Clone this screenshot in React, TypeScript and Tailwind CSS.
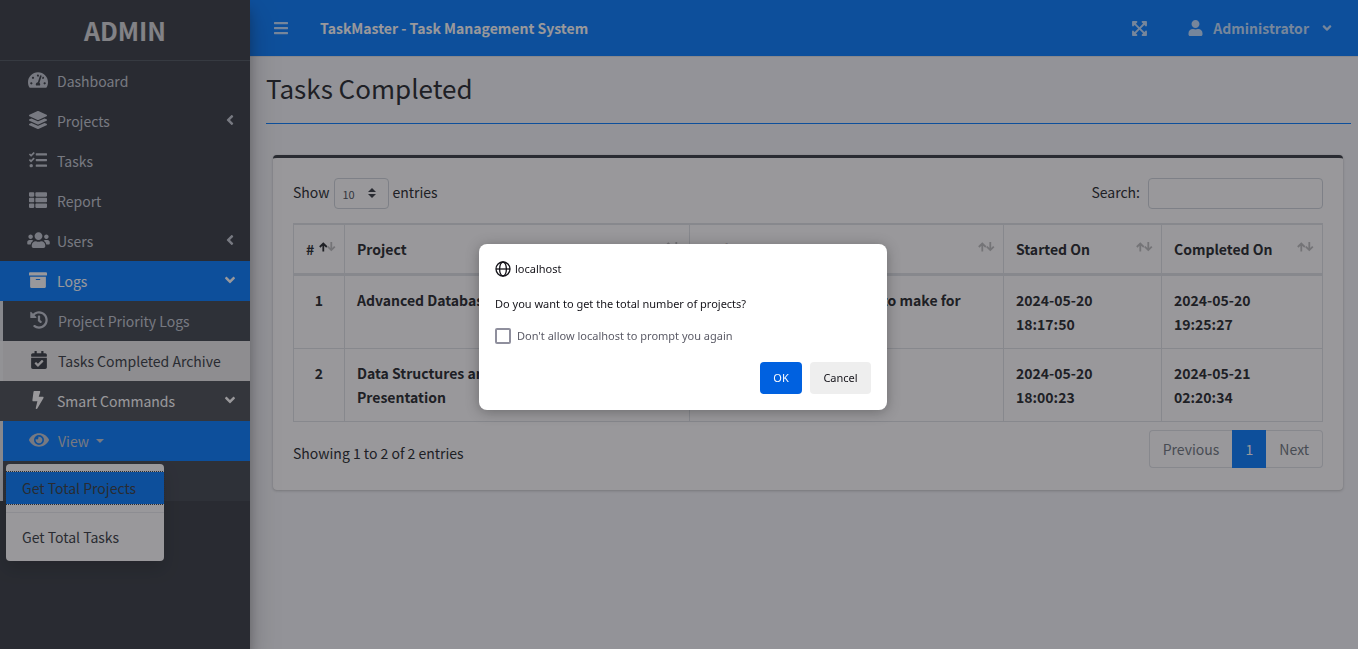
import type { ReactNode } from 'react';
import type { IconType } from 'react-icons';
import {
  FaAngleDown,
  FaAngleLeft,
  FaArchive,
  FaBars,
  FaBolt,
  FaCalendarCheck,
  FaExpandArrowsAlt,
  FaEye,
  FaHistory,
  FaLayerGroup,
  FaTachometerAlt,
  FaTasks,
  FaThList,
  FaUser,
  FaUsers,
} from 'react-icons/fa';

type NavLinkProps = {
  icon: IconType;
  label: ReactNode;
  arrow?: 'left' | 'down';
  iconWidth?: string;
  className: string;
};

function NavLink({ icon: Icon, label, arrow, iconWidth = 'w-[18px]', className }: NavLinkProps) {
  return (
    <a href="#" className={`flex h-10 items-center pr-[14px] ${className}`}>
      <span className="mr-1 flex w-[30px] justify-center pb-0.5">
        <Icon className={`h-[18px] shrink-0 ${iconWidth}`} />
      </span>
      <span className="flex flex-1 items-center">{label}</span>
      {arrow === 'left' && <FaAngleLeft className="mb-0.5 h-4 w-3" />}
      {arrow === 'down' && <FaAngleDown className="mb-0.5 h-4 w-3" />}
    </a>
  );
}

function Sidebar() {
  return (
    <aside className="relative z-10 w-[250px] shrink-0 bg-[#343a40] shadow-[0_14px_28px_rgba(0,0,0,0.25),0_10px_10px_rgba(0,0,0,0.22)]">
      <a
        href="#"
        className="flex h-[61px] items-center justify-center border-b border-[#4b545c] text-[25px] font-bold text-white/80"
      >
        ADMIN
      </a>
      <nav>
        <ul>
          <li>
            <NavLink icon={FaTachometerAlt} iconWidth="w-5" label="Dashboard" className="pl-[23px] text-[#c2c7d0]" />
          </li>
          <li>
            <NavLink icon={FaLayerGroup} label="Projects" arrow="left" className="pl-[23px] text-[#c2c7d0]" />
          </li>
          <li>
            <NavLink icon={FaTasks} label="Tasks" className="pl-[23px] text-[#c2c7d0]" />
          </li>
          <li>
            <NavLink icon={FaThList} label="Report" className="pl-[23px] text-[#c2c7d0]" />
          </li>
          <li>
            <NavLink
              icon={FaUsers}
              iconWidth="w-[23px]"
              label="Users"
              arrow="left"
              className="pl-[23px] text-[#c2c7d0]"
            />
          </li>
          <li>
            <NavLink icon={FaArchive} label="Logs" arrow="down" className="bg-[#007bff] pl-[23px] text-white" />
            <ul>
              <li className="border-l-3 border-[#dee2e6] bg-[#3d444c]">
                <NavLink icon={FaHistory} label="Project Priority Logs" className="pl-[21px] text-[#c2c7d0]" />
              </li>
              <li className="border-l-3 border-[#f3f4f5] bg-[#ebebec]">
                <NavLink icon={FaCalendarCheck} label="Tasks Completed Archive" className="pl-[21px] text-[#343a40]" />
              </li>
            </ul>
          </li>
          <li>
            <NavLink icon={FaBolt} label="Smart Commands" arrow="down" className="bg-[#484e53] pl-[23px] text-white" />
            <ul>
              <li className="relative border-l-3 border-[#dee2e6] bg-[#3d444c] pb-10">
                <NavLink
                  icon={FaEye}
                  iconWidth="w-5"
                  label={
                    <>
                      View
                      <svg viewBox="0 0 8 4" className="ml-[7px] h-1 w-2 fill-current">
                        <path d="M0 0h8L4 4z" />
                      </svg>
                    </>
                  }
                  className="bg-[#007bff] pl-[21px] text-[#c2c7d0]"
                />
                <div className="absolute top-[43px] left-[3px] w-[158px] rounded bg-white py-2 text-[#343a40] shadow-[0_8px_16px_rgba(0,0,0,0.18)]">
                  <a
                    href="#"
                    className="block bg-[#007bff] px-4 py-1 leading-6 outline-1 outline-dotted outline-[#343a40]"
                  >
                    Get Total Projects
                  </a>
                  <hr className="my-2 border-[#e9ecef]" />
                  <a href="#" className="block px-4 py-1 leading-6">
                    Get Total Tasks
                  </a>
                </div>
              </li>
            </ul>
          </li>
        </ul>
      </nav>
    </aside>
  );
}

function TopBar() {
  return (
    <header className="flex h-[57px] items-center border-b border-[#dee2e6] bg-[#007bff] px-6 font-bold text-white/75">
      <button type="button" aria-label="Toggle menu" className="mr-8">
        <FaBars className="h-4 w-[14px]" />
      </button>
      <a href="#" className="text-white">
        TaskMaster - Task Management System
      </a>
      <button type="button" aria-label="Full screen" className="ml-auto">
        <FaExpandArrowsAlt className="size-[17px]" />
      </button>
      <button type="button" className="ml-10 flex items-center">
        <FaUser className="mr-[10px] h-4 w-[15px]" />
        Administrator
        <FaAngleDown className="ml-[11px] size-[14px]" />
      </button>
    </header>
  );
}

function SortArrows({ sorted = false }: { sorted?: boolean }) {
  return (
    <svg
      viewBox="0 0 17 10"
      className="mb-1 h-[10px] w-[17px] fill-none stroke-current"
      strokeWidth="1.8"
      strokeLinejoin="miter"
    >
      <path d="M4.3 9.5V1.6M0.8 5L4.3 1.5L7.8 5" opacity={sorted ? 1 : 0.3} />
      <path d="M12.3 0V8M8.8 4.6L12.3 8.1L15.8 4.6" opacity="0.3" />
    </svg>
  );
}

const columns = [
  { label: '#', width: 'w-[51px]', sorted: true },
  { label: 'Project', width: 'w-[33.5%]', sorted: false },
  { label: 'Task', width: '', sorted: false },
  { label: 'Started On', width: 'w-[158px]', sorted: false },
  { label: 'Completed On', width: 'w-[161px]', sorted: false },
];

const rows = [
  ['1', 'Advanced Database', 'Choose the best diagrams to make for presentation', '2024-05-20 18:17:50', '2024-05-20 19:25:27'],
  ['2', 'Data Structures and Algorithms Project Presentation', 'Slides', '2024-05-20 18:00:23', '2024-05-21 02:20:34'],
];

function TasksTable() {
  return (
    <table className="mt-[14px] w-full table-fixed border-separate border-spacing-0 border-r border-[#dee2e6] text-left font-bold">
      <thead>
        <tr>
          {columns.map((column) => (
            <th
              key={column.label}
              className={`border-t-2 border-b-3 border-l border-[#dee2e6] py-3 pr-2 pl-3 ${column.width}`}
            >
              <div className="flex items-center justify-between">
                {column.label}
                <SortArrows sorted={column.sorted} />
              </div>
            </th>
          ))}
        </tr>
      </thead>
      <tbody>
        {rows.map((row) => (
          <tr key={row[0]}>
            {row.map((cell, index) => (
              <td
                key={index}
                className={`border-b border-l border-[#dee2e6] p-3 align-top ${index === 0 ? 'text-center' : ''}`}
              >
                {cell}
              </td>
            ))}
          </tr>
        ))}
      </tbody>
    </table>
  );
}

function TasksCard() {
  return (
    <section className="mt-[31px] mr-2 ml-[7px] rounded border-t-3 border-[#343a40] bg-white px-5 pt-5 pb-[22px] shadow-[0_0_1px_rgba(0,0,0,0.125),0_1px_3px_rgba(0,0,0,0.2)]">
      <div className="flex items-start justify-between leading-7">
        <label className="flex items-start gap-1">
          Show
          <span className="relative">
            <select className="block h-[31px] w-[55px] appearance-none rounded border border-[#ced4da] bg-white pl-2 text-[11px] text-[#495057]">
              <option>10</option>
              <option>25</option>
              <option>50</option>
            </select>
            <svg
              viewBox="0 0 8 10"
              className="pointer-events-none absolute top-[10px] right-[13px] h-[10px] w-2 fill-[#343a40]"
            >
              <path d="M4 0L8 4H0zM4 10L0 6h8z" />
            </svg>
          </span>
          entries
        </label>
        <label className="flex items-start gap-2">
          Search:
          <input type="search" className="h-[31px] w-[175px] rounded border border-[#ced4da] bg-white px-2" />
        </label>
      </div>
      <TasksTable />
      <div className="mt-2 flex items-start justify-between">
        <p className="pt-[11px]">Showing 1 to 2 of 2 entries</p>
        <nav className="flex h-[38px] items-stretch text-[#6c757d]">
          <button type="button" className="rounded-l border border-r-0 border-[#dee2e6] px-[13px]">
            Previous
          </button>
          <button type="button" className="w-[34px] bg-[#007bff] text-white">
            1
          </button>
          <button type="button" className="rounded-r border border-l-0 border-[#dee2e6] px-[13px]">
            Next
          </button>
        </nav>
      </div>
    </section>
  );
}

function ConfirmDialog() {
  return (
    <div className="fixed inset-0 z-20 flex items-center justify-center bg-[rgba(28,27,34,0.45)]">
      <div
        role="dialog"
        aria-modal="true"
        className="mt-[5px] ml-2 w-[408px] rounded-lg bg-white p-4 font-['Noto_Sans',sans-serif] text-[11px] text-[#15141a] shadow-[0_2px_14px_rgba(0,0,0,0.3)]"
      >
        <div className="flex h-[18px] items-center gap-1">
          <svg viewBox="0 0 16 16" className="size-4 fill-none stroke-current" strokeWidth="1.3">
            <circle cx="8" cy="8" r="7" />
            <ellipse cx="8" cy="8" rx="3.4" ry="7" />
            <path d="M1 8h14" />
          </svg>
          localhost
        </div>
        <p className="mt-[17px] leading-[18px]">Do you want to get the total number of projects?</p>
        <label className="mt-[15px] flex h-4 items-center gap-[6px] text-[#5b5b66]">
          <input type="checkbox" className="size-4 appearance-none rounded-xs border-2 border-[#8f8f9d] bg-white" />
          Don't allow localhost to prompt you again
        </label>
        <div className="mt-[18px] flex justify-end gap-2">
          <button type="button" className="h-8 w-[42px] rounded bg-[#0061e0] text-[#fbfbfe]">
            OK
          </button>
          <button type="button" className="h-8 w-[61px] rounded bg-[#eeeeee]">
            Cancel
          </button>
        </div>
      </div>
    </div>
  );
}

export default function App() {
  return (
    <div className="flex min-h-screen bg-[#f4f6f9] font-['Noto_Sans_CJK_JP',sans-serif] text-sm leading-6 text-[#212529]">
      <Sidebar />
      <div className="flex min-w-0 flex-1 flex-col">
        <TopBar />
        <main className="pr-[7px] pl-4">
          <h1 className="pt-[13px] text-[26px] leading-9">Tasks Completed</h1>
          <hr className="mt-[17px] border-[#007bff]" />
          <TasksCard />
        </main>
      </div>
      <ConfirmDialog />
    </div>
  );
}
